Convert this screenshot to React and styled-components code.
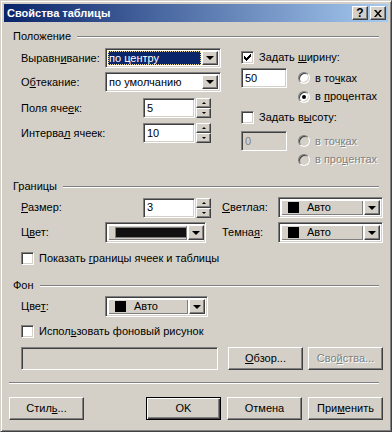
import React from "react";
import styled, { createGlobalStyle, css } from "styled-components";

const FACE = "#D4D0C8";
const SHADOW = "#808080";
const DARK = "#404040";

const GlobalStyle = createGlobalStyle`
  html, body {
    margin: 0;
    padding: 0;
    background: ${FACE};
  }
  body {
    font-family: "Liberation Sans", Arial, sans-serif;
    font-size: 11px;
    line-height: 13px;
    color: #000;
  }
`;

const sunken = css`
  border: 1px solid;
  border-color: ${SHADOW} #fff #fff ${SHADOW};
  box-shadow: inset 1px 1px ${DARK}, inset -1px -1px ${FACE};
`;

const raised = css`
  border: 1px solid;
  border-color: #fff ${DARK} ${DARK} #fff;
  box-shadow: inset -1px -1px ${SHADOW};
`;

const Window = styled.div`
  width: 392px;
  height: 432px;
  box-sizing: border-box;
  background: ${FACE};
  border: 1px solid;
  border-color: ${FACE} ${DARK} ${DARK} ${FACE};
  box-shadow: inset 1px 1px #fff, inset -1px -1px ${SHADOW};
  padding: 3px;
  display: flex;
  flex-direction: column;
`;

const TitleBar = styled.div`
  height: 18px;
  display: flex;
  align-items: center;
  justify-content: space-between;
  padding: 0 2px 0 3px;
  background: linear-gradient(to right, #0a246a, #a6caf0);
`;

const Title = styled.span`
  color: #fff;
  font-weight: bold;
  font-size: 11px;
`;

const Caps = styled.div`
  display: flex;
  gap: 2px;
`;

const CapButton = styled.div`
  width: 16px;
  height: 14px;
  box-sizing: border-box;
  background: ${FACE};
  ${raised};
  display: flex;
  align-items: center;
  justify-content: center;
  font-weight: bold;
  font-size: 12px;
  line-height: 12px;
`;

const Body = styled.div`
  display: flex;
  flex-direction: column;
  padding: 0 5px;
`;

const SectionHead = styled.div`
  display: flex;
  align-items: center;
  gap: 6px;
  padding: 0 4px;
  height: 13px;
  margin-top: ${(p) => p.$top}px;
`;

const Groove = styled.div`
  flex: 1;
  height: 0;
  border-top: 1px solid ${SHADOW};
  border-bottom: 1px solid #fff;
`;

const Separator = styled(Groove)`
  flex: none;
  margin: 12px 4px 0 0;
`;

const Columns = styled.div`
  display: flex;
  margin-top: 5px;
  padding-left: 12px;
`;

const Column = styled.div`
  display: flex;
  flex-direction: column;
  width: ${(p) => p.$w}px;
  padding-top: ${(p) => p.$pt || 0}px;
`;

const Row = styled.div`
  display: flex;
  align-items: center;
  height: ${(p) => p.$h || 20}px;
  margin-top: ${(p) => p.$top || 0}px;
  padding-left: ${(p) => p.$pl || 0}px;
`;

const Label = styled.span`
  width: ${(p) => p.$w}px;
  flex: none;
  white-space: nowrap;
  color: ${(p) => (p.$off ? SHADOW : "#000")};
  text-shadow: ${(p) => (p.$off ? "1px 1px 0 #fff" : "none")};
`;

const U = styled.span`
  text-decoration: underline;
`;

const Field = styled.div`
  width: ${(p) => p.$w}px;
  height: ${(p) => p.$h || 20}px;
  box-sizing: border-box;
  ${sunken};
  background: ${(p) => (p.$off ? FACE : "#fff")};
  color: ${(p) => (p.$off ? SHADOW : "#000")};
  display: flex;
  align-items: center;
  padding: 2px;
  margin-left: ${(p) => p.$ml || 0}px;
  flex: none;
`;

const FieldText = styled.span`
  padding-left: 1px;
`;

const Highlight = styled.span`
  flex: 1;
  align-self: stretch;
  display: flex;
  align-items: center;
  padding-left: 1px;
  margin-right: 1px;
  background: #0a246a;
  color: #fff;
  outline: 1px dotted #f5db95;
  outline-offset: -1px;
`;

const ValueArea = styled.div`
  flex: 1;
  align-self: stretch;
  display: flex;
  align-items: center;
`;

const SwatchArea = styled(ValueArea)`
  background: ${FACE};
  box-shadow: inset 1px 1px #fff, inset -1px -1px ${SHADOW};
  padding-left: 7px;
  gap: 8px;
  margin-right: 1px;
`;

const Swatch = styled.span`
  width: ${(p) => p.$w || 11}px;
  height: ${(p) => p.$h || 11}px;
  background: ${(p) => p.$c || "#000"};
  box-sizing: border-box;
  border: 1px solid ${(p) => (p.$wide ? SHADOW : "#000")};
  flex: none;
`;

const DropButton = styled.div`
  width: 16px;
  align-self: stretch;
  box-sizing: border-box;
  background: ${FACE};
  ${raised};
  display: flex;
  align-items: center;
  justify-content: center;
  flex: none;
`;

const Arrow = styled.span`
  width: 0;
  height: 0;
  border-left: ${(p) => p.$s || 4}px solid transparent;
  border-right: ${(p) => p.$s || 4}px solid transparent;
  ${(p) =>
    p.$up
      ? `border-bottom: ${(p.$s || 4)}px solid #000;`
      : `border-top: ${(p.$s || 4)}px solid #000;`}
`;

const Spin = styled.div`
  display: flex;
  gap: 1px;
  margin-left: ${(p) => p.$ml || 0}px;
  flex: none;
`;

const SpinButtons = styled.div`
  display: flex;
  flex-direction: column;
  width: 15px;
  height: 20px;
`;

const SpinBtn = styled.div`
  flex: 1;
  box-sizing: border-box;
  background: ${FACE};
  ${raised};
  display: flex;
  align-items: center;
  justify-content: center;
`;

const Check = styled.span`
  width: 13px;
  height: 13px;
  box-sizing: border-box;
  ${sunken};
  background: #fff;
  display: flex;
  align-items: center;
  justify-content: center;
  flex: none;
  margin-right: 5px;
`;

const Radio = styled.span`
  width: 12px;
  height: 12px;
  box-sizing: border-box;
  border-radius: 50%;
  border: 1px solid;
  border-color: ${SHADOW} #fff #fff ${SHADOW};
  box-shadow: inset 1px 1px ${DARK}, inset -1px -1px ${FACE};
  background: ${(p) => (p.$off ? FACE : "#fff")};
  display: flex;
  align-items: center;
  justify-content: center;
  flex: none;
  margin-right: 5px;
  &::after {
    content: "";
    width: 4px;
    height: 4px;
    border-radius: 50%;
    background: ${(p) => (p.$on ? "#000" : "transparent")};
  }
`;

const Button = styled.div`
  width: ${(p) => p.$w || 75}px;
  height: 23px;
  box-sizing: border-box;
  background: ${FACE};
  display: flex;
  align-items: center;
  justify-content: center;
  flex: none;
  margin-left: ${(p) => p.$ml || 0}px;
  color: ${(p) => (p.$off ? SHADOW : "#000")};
  text-shadow: ${(p) => (p.$off ? "1px 1px 0 #fff" : "none")};
  ${(p) =>
    p.$default
      ? css`
          border: 1px solid #000;
          box-shadow: inset 1px 1px #fff, inset -1px -1px ${DARK},
            inset -2px -2px ${SHADOW};
        `
      : css`
          border: 1px solid;
          border-color: #fff ${DARK} ${DARK} #fff;
          box-shadow: inset -1px -1px ${SHADOW};
        `}
`;

const ButtonRow = styled.div`
  display: flex;
  margin-top: 13px;
`;

const Spacer = styled.div`
  flex: 1;
`;

const CheckMark = () => (
  <svg width="7" height="7" viewBox="0 0 7 7">
    <path
      d="M6 0h1v3h-1zM5 1h1v3h-1zM4 2h1v3h-1zM0 2h1v3h-1zM1 3h1v3h-1zM2 4h1v3h-1zM3 3h1v3h-1z"
      fill="#000"
    />
  </svg>
);

const CloseGlyph = () => (
  <svg width="8" height="7" viewBox="0 0 8 7">
    <path
      d="M0 0h2l2 2.5L6 0h2L5 3.5 8 7H6L4 4.5 2 7H0l3-3.5z"
      fill="#000"
    />
  </svg>
);

const Select = ({ w, children }) => (
  <Field $w={w}>
    {children}
    <DropButton>
      <Arrow />
    </DropButton>
  </Field>
);

const ColorSelect = ({ w, h = 21, wide }) => (
  <Field $w={w} $h={h}>
    <SwatchArea>
      {wide ? (
        <Swatch $w={72} $h={11} $c="#111" $wide />
      ) : (
        <>
          <Swatch />
          <span>Авто</span>
        </>
      )}
    </SwatchArea>
    <DropButton>
      <Arrow />
    </DropButton>
  </Field>
);

const SpinBox = ({ value, ml }) => (
  <Spin $ml={ml}>
    <Field $w={52}>
      <FieldText>{value}</FieldText>
    </Field>
    <SpinButtons>
      <SpinBtn>
        <Arrow $up $s={2} />
      </SpinBtn>
      <SpinBtn>
        <Arrow $s={2} />
      </SpinBtn>
    </SpinButtons>
  </Spin>
);

export default function App() {
  return (
    <>
      <GlobalStyle />
      <Window>
        <TitleBar>
          <Title>Свойства таблицы</Title>
          <Caps>
            <CapButton>?</CapButton>
            <CapButton>
              <CloseGlyph />
            </CapButton>
          </Caps>
        </TitleBar>
        <Body>
          <SectionHead $top={8}>
            <span>Положение</span>
            <Groove />
          </SectionHead>
          <Columns>
            <Column $w={220}>
              <Row>
                <Label $w={84}>
                  Выравн<U>и</U>вание:
                </Label>
                <Select w={116}>
                  <Highlight>по центру</Highlight>
                </Select>
              </Row>
              <Row $top={4}>
                <Label $w={84}>
                  О<U>б</U>текание:
                </Label>
                <Select w={116}>
                  <ValueArea>
                    <FieldText>по умолчанию</FieldText>
                  </ValueArea>
                </Select>
              </Row>
              <Row $top={6}>
                <Label $w={122}>
                  Поля яче<U>е</U>к:
                </Label>
                <SpinBox value="5" />
              </Row>
              <Row $top={5}>
                <Label $w={122}>
                  Интерва<U>л</U> ячеек:
                </Label>
                <SpinBox value="10" />
              </Row>
            </Column>
            <Column $w={142} $pt={3}>
              <Row $h={13}>
                <Check>
                  <CheckMark />
                </Check>
                <span>
                  Задать <U>ш</U>ирину:
                </span>
              </Row>
              <Row $top={4}>
                <Field $w={46}>
                  <FieldText>50</FieldText>
                </Field>
                <Radio style={{ marginLeft: 11 }} />
                <span>
                  в то<U>ч</U>ках
                </span>
              </Row>
              <Row $h={13} $top={2} $pl={57}>
                <Radio $on />
                <span>
                  в <U>п</U>роцентах
                </span>
              </Row>
              <Row $h={13} $top={8}>
                <Check />
                <span>
                  Задать в<U>ы</U>соту:
                </span>
              </Row>
              <Row $top={7}>
                <Field $w={46} $off>
                  <FieldText>0</FieldText>
                </Field>
                <Radio $off style={{ marginLeft: 11 }} />
                <Label $off>
                  в точ<U>к</U>ах
                </Label>
              </Row>
              <Row $h={13} $top={2} $pl={57}>
                <Radio $off />
                <Label $off>
                  в про<U>ц</U>ентах
                </Label>
              </Row>
            </Column>
          </Columns>

          <SectionHead $top={14}>
            <span>Границы</span>
            <Groove />
          </SectionHead>
          <Row $h={21} $top={4} $pl={12}>
            <Label $w={122}>
              <U>Р</U>азмер:
            </Label>
            <SpinBox value="3" />
            <Label $w={56} style={{ marginLeft: 11 }}>
              <U>С</U>ветлая:
            </Label>
            <ColorSelect w={105} />
          </Row>
          <Row $h={21} $top={4} $pl={12}>
            <Label $w={84}>
              Ц<U>в</U>ет:
            </Label>
            <ColorSelect w={101} wide />
            <Label $w={56} style={{ marginLeft: 16 }}>
              Темна<U>я</U>:
            </Label>
            <ColorSelect w={105} />
          </Row>
          <Row $h={13} $top={9} $pl={12}>
            <Check />
            <span>
              Показать <U>г</U>раницы ячеек и таблицы
            </span>
          </Row>

          <SectionHead $top={14}>
            <span>Фон</span>
            <Groove />
          </SectionHead>
          <Row $h={21} $top={4} $pl={12}>
            <Label $w={84}>
              Цве<U>т</U>:
            </Label>
            <ColorSelect w={103} />
          </Row>
          <Row $h={13} $top={8} $pl={12}>
            <Check />
            <span>
              Испол<U>ь</U>зовать фоновый рисунок
            </span>
          </Row>
          <Row $h={23} $top={9} $pl={12}>
            <Field $w={197} $h={23} $off />
            <Button $ml={10}>
              <span>
                <U>О</U>бзор...
              </span>
            </Button>
            <Button $ml={5} $off>
              <span>
                Сво<U>й</U>ства...
              </span>
            </Button>
          </Row>

          <Separator />
          <ButtonRow>
            <Button>
              <span>
                Стил<U>ь</U>...
              </span>
            </Button>
            <Spacer />
            <Button $default>OK</Button>
            <Button $ml={6}>Отмена</Button>
            <Button $ml={6}>
              <span>
                При<U>м</U>енить
              </span>
            </Button>
          </ButtonRow>
        </Body>
      </Window>
    </>
  );
}
